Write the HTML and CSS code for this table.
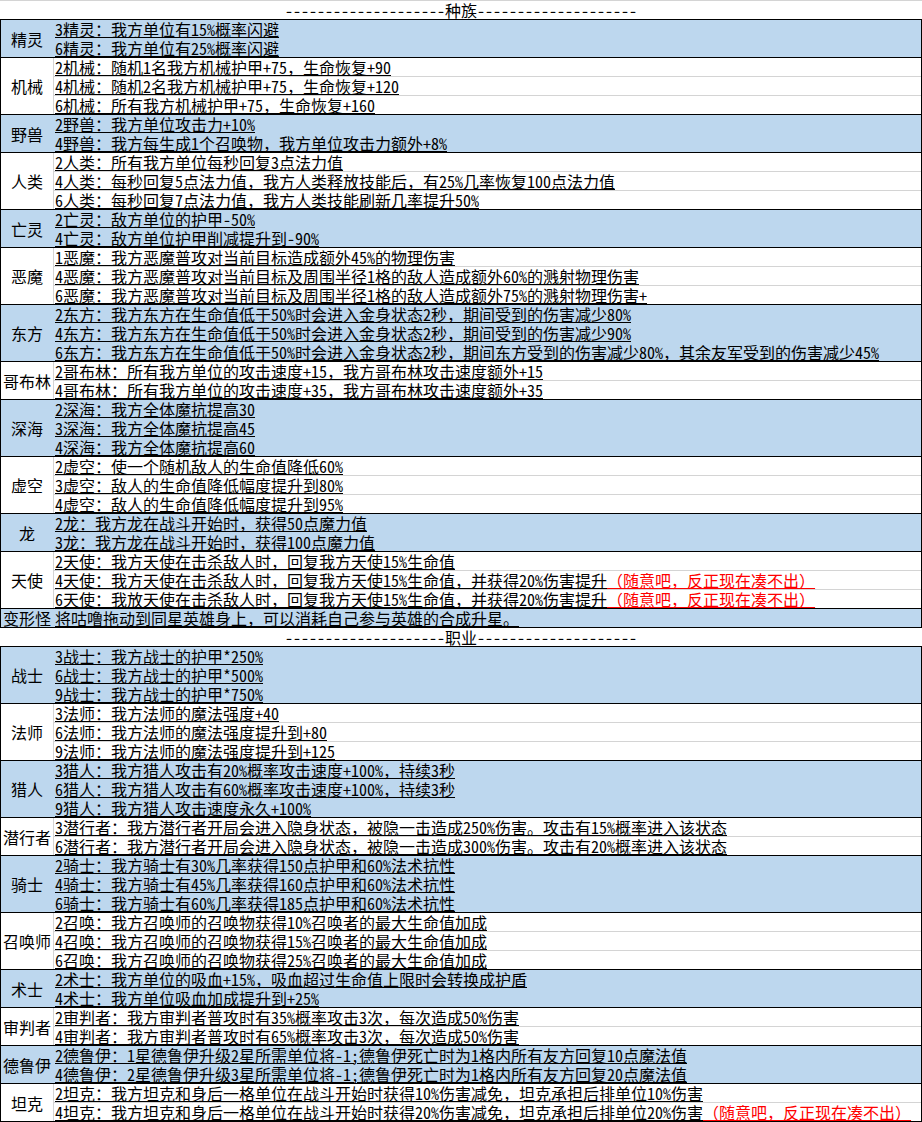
FILE: index.html
```html
<!DOCTYPE html>
<html lang="zh-CN">
<head>
<meta charset="utf-8">
<title>羁绊表</title>
<link rel="stylesheet" href="styles.css">
</head>
<body>
<div class="sheet">
  <div class="hdr">--------------------种族--------------------</div>

  <div class="grp blue"><div class="cat">精灵</div><div class="lines">
    <div class="ln">3精灵：我方单位有15%概率闪避</div>
    <div class="ln">6精灵：我方单位有25%概率闪避</div>
  </div></div>

  <div class="grp"><div class="cat">机械</div><div class="lines">
    <div class="ln">2机械：随机1名我方机械护甲+75，生命恢复+90</div>
    <div class="ln">4机械：随机2名我方机械护甲+75，生命恢复+120</div>
    <div class="ln">6机械：所有我方机械护甲+75，生命恢复+160</div>
  </div></div>

  <div class="grp blue"><div class="cat">野兽</div><div class="lines">
    <div class="ln">2野兽：我方单位攻击力+10%</div>
    <div class="ln">4野兽：我方每生成1个召唤物，我方单位攻击力额外+8%</div>
  </div></div>

  <div class="grp"><div class="cat">人类</div><div class="lines">
    <div class="ln">2人类：所有我方单位每秒回复3点法力值</div>
    <div class="ln">4人类：每秒回复5点法力值，我方人类释放技能后，有25%几率恢复100点法力值</div>
    <div class="ln">6人类：每秒回复7点法力值，我方人类技能刷新几率提升50%</div>
  </div></div>

  <div class="grp blue"><div class="cat">亡灵</div><div class="lines">
    <div class="ln">2亡灵：敌方单位的护甲-50%</div>
    <div class="ln">4亡灵：敌方单位护甲削减提升到-90%</div>
  </div></div>

  <div class="grp"><div class="cat">恶魔</div><div class="lines">
    <div class="ln">1恶魔：我方恶魔普攻对当前目标造成额外45%的物理伤害</div>
    <div class="ln">4恶魔：我方恶魔普攻对当前目标及周围半径1格的敌人造成额外60%的溅射物理伤害</div>
    <div class="ln">6恶魔：我方恶魔普攻对当前目标及周围半径1格的敌人造成额外75%的溅射物理伤害+</div>
  </div></div>

  <div class="grp blue"><div class="cat">东方</div><div class="lines">
    <div class="ln">2东方：我方东方在生命值低于50%时会进入金身状态2秒，期间受到的伤害减少80%</div>
    <div class="ln">4东方：我方东方在生命值低于50%时会进入金身状态2秒，期间受到的伤害减少90%</div>
    <div class="ln">6东方：我方东方在生命值低于50%时会进入金身状态2秒，期间东方受到的伤害减少80%，其余友军受到的伤害减少45%</div>
  </div></div>

  <div class="grp"><div class="cat">哥布林</div><div class="lines">
    <div class="ln">2哥布林：所有我方单位的攻击速度+15，我方哥布林攻击速度额外+15</div>
    <div class="ln">4哥布林：所有我方单位的攻击速度+35，我方哥布林攻击速度额外+35</div>
  </div></div>

  <div class="grp blue"><div class="cat">深海</div><div class="lines">
    <div class="ln">2深海：我方全体魔抗提高30</div>
    <div class="ln">3深海：我方全体魔抗提高45</div>
    <div class="ln">4深海：我方全体魔抗提高60</div>
  </div></div>

  <div class="grp"><div class="cat">虚空</div><div class="lines">
    <div class="ln">2虚空：使一个随机敌人的生命值降低60%</div>
    <div class="ln">3虚空：敌人的生命值降低幅度提升到80%</div>
    <div class="ln">4虚空：敌人的生命值降低幅度提升到95%</div>
  </div></div>

  <div class="grp blue"><div class="cat">龙</div><div class="lines">
    <div class="ln">2龙：我方龙在战斗开始时，获得50点魔力值</div>
    <div class="ln">3龙：我方龙在战斗开始时，获得100点魔力值</div>
  </div></div>

  <div class="grp"><div class="cat">天使</div><div class="lines">
    <div class="ln">2天使：我方天使在击杀敌人时，回复我方天使15%生命值</div>
    <div class="ln">4天使：我方天使在击杀敌人时，回复我方天使15%生命值，并获得20%伤害提升<span class="red">（随意吧，反正现在凑不出）</span></div>
    <div class="ln">6天使：我放天使在击杀敌人时，回复我方天使15%生命值，并获得20%伤害提升<span class="red">（随意吧，反正现在凑不出）</span></div>
  </div></div>

  <div class="grp blue"><div class="cat">变形怪</div><div class="lines">
    <div class="ln">将咕噜拖动到同星英雄身上，可以消耗自己参与英雄的合成升星。</div>
  </div></div>

  <div class="hdr">--------------------职业--------------------</div>

  <div class="grp blue"><div class="cat">战士</div><div class="lines">
    <div class="ln">3战士：我方战士的护甲*250%</div>
    <div class="ln">6战士：我方战士的护甲*500%</div>
    <div class="ln">9战士：我方战士的护甲*750%</div>
  </div></div>

  <div class="grp"><div class="cat">法师</div><div class="lines">
    <div class="ln">3法师：我方法师的魔法强度+40</div>
    <div class="ln">6法师：我方法师的魔法强度提升到+80</div>
    <div class="ln">9法师：我方法师的魔法强度提升到+125</div>
  </div></div>

  <div class="grp blue"><div class="cat">猎人</div><div class="lines">
    <div class="ln">3猎人：我方猎人攻击有20%概率攻击速度+100%，持续3秒</div>
    <div class="ln">6猎人：我方猎人攻击有60%概率攻击速度+100%，持续3秒</div>
    <div class="ln">9猎人：我方猎人攻击速度永久+100%</div>
  </div></div>

  <div class="grp"><div class="cat">潜行者</div><div class="lines">
    <div class="ln">3潜行者：我方潜行者开局会进入隐身状态，被隐一击造成250%伤害。攻击有15%概率进入该状态</div>
    <div class="ln">6潜行者：我方潜行者开局会进入隐身状态，被隐一击造成300%伤害。攻击有20%概率进入该状态</div>
  </div></div>

  <div class="grp blue"><div class="cat">骑士</div><div class="lines">
    <div class="ln">2骑士：我方骑士有30%几率获得150点护甲和60%法术抗性</div>
    <div class="ln">4骑士：我方骑士有45%几率获得160点护甲和60%法术抗性</div>
    <div class="ln">6骑士：我方骑士有60%几率获得185点护甲和60%法术抗性</div>
  </div></div>

  <div class="grp"><div class="cat">召唤师</div><div class="lines">
    <div class="ln">2召唤：我方召唤师的召唤物获得10%召唤者的最大生命值加成</div>
    <div class="ln">4召唤：我方召唤师的召唤物获得15%召唤者的最大生命值加成</div>
    <div class="ln">6召唤：我方召唤师的召唤物获得25%召唤者的最大生命值加成</div>
  </div></div>

  <div class="grp blue"><div class="cat">术士</div><div class="lines">
    <div class="ln">2术士：我方单位的吸血+15%，吸血超过生命值上限时会转换成护盾</div>
    <div class="ln">4术士：我方单位吸血加成提升到+25%</div>
  </div></div>

  <div class="grp"><div class="cat">审判者</div><div class="lines">
    <div class="ln">2审判者：我方审判者普攻时有35%概率攻击3次，每次造成50%伤害</div>
    <div class="ln">4审判者：我方审判者普攻时有65%概率攻击3次，每次造成50%伤害</div>
  </div></div>

  <div class="grp blue"><div class="cat">德鲁伊</div><div class="lines">
    <div class="ln">2德鲁伊：1星德鲁伊升级2星所需单位将-1;德鲁伊死亡时为1格内所有友方回复10点魔法值</div>
    <div class="ln">4德鲁伊：2星德鲁伊升级3星所需单位将-1;德鲁伊死亡时为1格内所有友方回复20点魔法值</div>
  </div></div>

  <div class="grp"><div class="cat">坦克</div><div class="lines">
    <div class="ln">2坦克：我方坦克和身后一格单位在战斗开始时获得10%伤害减免，坦克承担后排单位10%伤害</div>
    <div class="ln">4坦克：我方坦克和身后一格单位在战斗开始时获得20%伤害减免，坦克承担后排单位20%伤害<span class="red">（随意吧，反正现在凑不出）</span></div>
  </div></div>
</div>
</body>
</html>
```
FILE: styles.css
```css
html, body {
  margin: 0;
  padding: 0;
  background: #ffffff;
}

.sheet {
  width: 922px;
  border-top: 1px solid #d4d4d4;
  font-family: "Noto Sans Mono CJK SC", "Noto Sans CJK SC", monospace;
  font-size: 16px;
  color: #000000;
}

.hdr {
  height: 19px;
  box-sizing: border-box;
  border-bottom: 1px solid #000000;
  line-height: 18px;
  text-align: center;
  white-space: nowrap;
}

.grp {
  display: flex;
  border-left: 1px solid #000000;
  border-right: 1px solid #000000;
  border-bottom: 1px solid #000000;
  background: #ffffff;
}

.grp.blue {
  background: #bdd7ee;
}

.cat {
  flex: none;
  width: 52px;
  border-right: 1px solid #d4d4d4;
  display: flex;
  align-items: center;
  justify-content: center;
  line-height: 18px;
  white-space: nowrap;
}

.blue .cat {
  border-right-color: transparent;
}

.lines {
  flex: 1;
  min-width: 0;
}

.ln {
  height: 19px;
  box-sizing: border-box;
  border-bottom: 1px solid #d4d4d4;
  line-height: 18px;
  padding-left: 1px;
  white-space: nowrap;
  text-decoration: underline;
  text-decoration-thickness: 1px;
  text-underline-offset: 1px;
}

.ln:last-child {
  height: 18px;
  border-bottom: 0;
}

.blue .ln {
  border-bottom-color: transparent;
}

.red {
  color: #ff0000;
  text-decoration: underline;
  text-decoration-thickness: 1px;
  text-underline-offset: 1px;
}
```
